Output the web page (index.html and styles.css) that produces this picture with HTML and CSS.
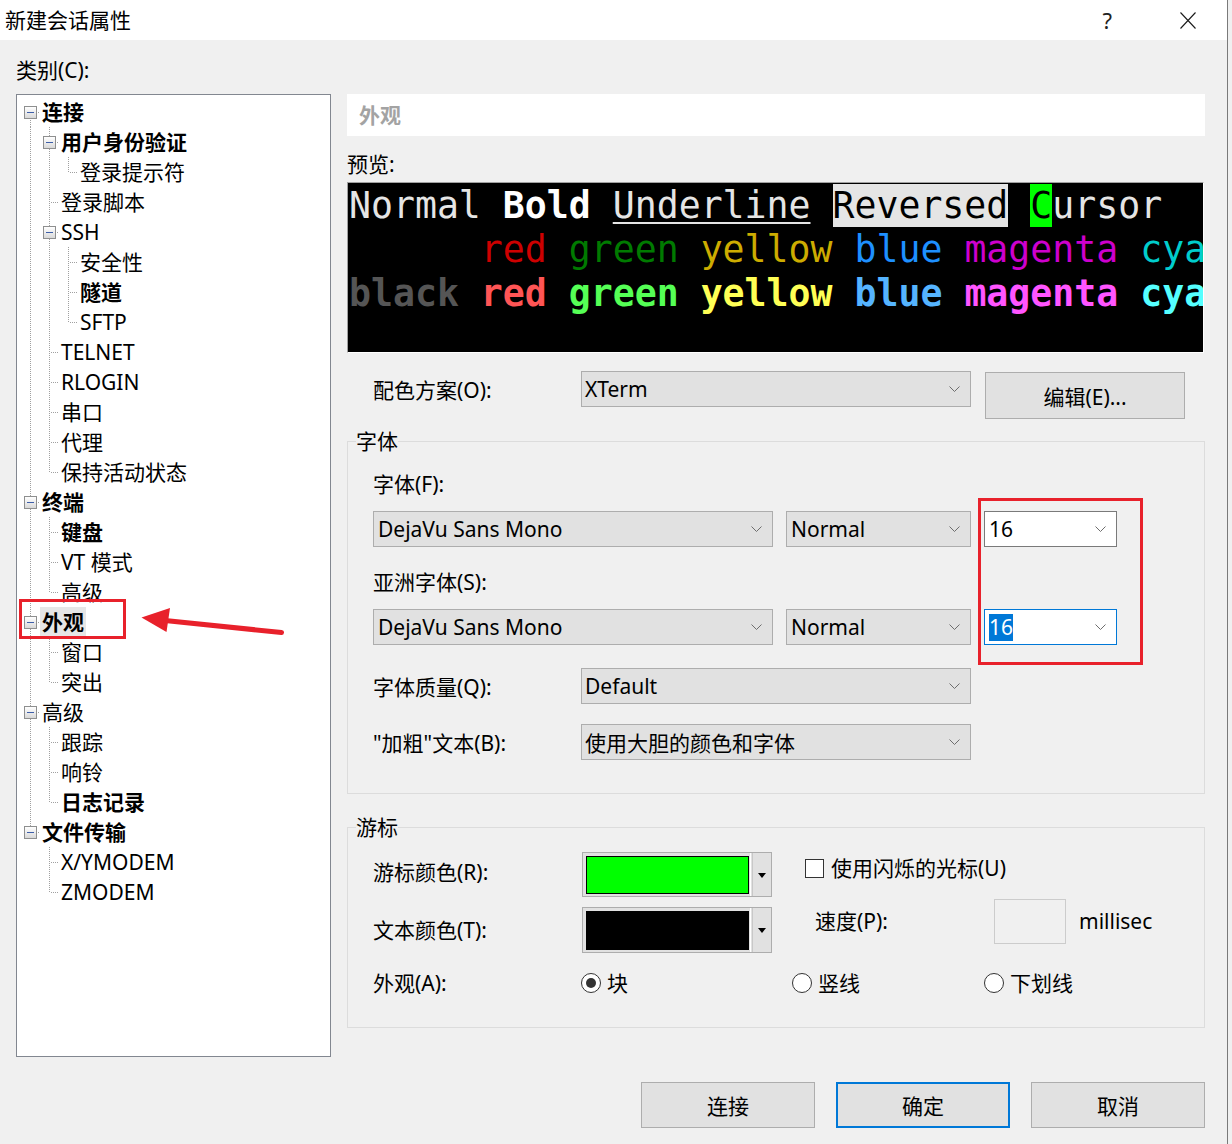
FILE: index.html
```html
<!DOCTYPE html>
<html lang="zh-CN">
<head>
<meta charset="utf-8">
<title>新建会话属性</title>
<link rel="stylesheet" href="styles.css">
</head>
<body>
<div class="window">
  <div class="titlebar">
    <span class="title">新建会话属性</span>
    <span class="help">?</span>
    <span class="close"><svg width="16" height="17" viewBox="0 0 16 17"><path d="M0.5 0.5 L15.5 16.5 M15.5 0.5 L0.5 16.5" stroke="#1a1a1a" stroke-width="1.1" fill="none"/></svg></span>
  </div>
  <div class="client">
    <div class="cat-label">类别(C):</div>
    <div class="main">
      <div class="tree">
        <div class="row"><i class="c first"><b class="box"></b></i><span class="lbl bold">连接</span></div>
        <div class="row"><i class="c pipe"></i><i class="c tee"><b class="box"></b></i><span class="lbl bold">用户身份验证</span></div>
        <div class="row"><i class="c pipe"></i><i class="c pipe"></i><i class="c ell"></i><span class="lbl">登录提示符</span></div>
        <div class="row"><i class="c pipe"></i><i class="c tee"></i><span class="lbl">登录脚本</span></div>
        <div class="row"><i class="c pipe"></i><i class="c tee"><b class="box"></b></i><span class="lbl">SSH</span></div>
        <div class="row"><i class="c pipe"></i><i class="c pipe"></i><i class="c tee"></i><span class="lbl">安全性</span></div>
        <div class="row"><i class="c pipe"></i><i class="c pipe"></i><i class="c tee"></i><span class="lbl bold">隧道</span></div>
        <div class="row"><i class="c pipe"></i><i class="c pipe"></i><i class="c ell"></i><span class="lbl">SFTP</span></div>
        <div class="row"><i class="c pipe"></i><i class="c tee"></i><span class="lbl">TELNET</span></div>
        <div class="row"><i class="c pipe"></i><i class="c tee"></i><span class="lbl">RLOGIN</span></div>
        <div class="row"><i class="c pipe"></i><i class="c tee"></i><span class="lbl">串口</span></div>
        <div class="row"><i class="c pipe"></i><i class="c tee"></i><span class="lbl">代理</span></div>
        <div class="row"><i class="c pipe"></i><i class="c ell"></i><span class="lbl">保持活动状态</span></div>
        <div class="row"><i class="c tee"><b class="box"></b></i><span class="lbl bold">终端</span></div>
        <div class="row"><i class="c pipe"></i><i class="c tee"></i><span class="lbl bold">键盘</span></div>
        <div class="row"><i class="c pipe"></i><i class="c tee"></i><span class="lbl">VT 模式</span></div>
        <div class="row"><i class="c pipe"></i><i class="c ell"></i><span class="lbl">高级</span></div>
        <div class="row"><i class="c tee"><b class="box"></b></i><span class="lbl bold selected">外观</span></div>
        <div class="row"><i class="c pipe"></i><i class="c tee"></i><span class="lbl">窗口</span></div>
        <div class="row"><i class="c pipe"></i><i class="c ell"></i><span class="lbl">突出</span></div>
        <div class="row"><i class="c tee"><b class="box"></b></i><span class="lbl">高级</span></div>
        <div class="row"><i class="c pipe"></i><i class="c tee"></i><span class="lbl">跟踪</span></div>
        <div class="row"><i class="c pipe"></i><i class="c tee"></i><span class="lbl">响铃</span></div>
        <div class="row"><i class="c pipe"></i><i class="c ell"></i><span class="lbl bold">日志记录</span></div>
        <div class="row"><i class="c ell"><b class="box"></b></i><span class="lbl bold">文件传输</span></div>
        <div class="row"><i class="c"></i><i class="c tee"></i><span class="lbl">X/YMODEM</span></div>
        <div class="row"><i class="c"></i><i class="c ell"></i><span class="lbl">ZMODEM</span></div>
      </div>

      <div class="panel">
        <div class="header">外观</div>
        <div class="preview-label">预览:</div>
        <div class="preview">
          <div class="tline"><span class="fg">Normal</span> <span class="bw">Bold</span> <span class="ul">Underline</span> <span class="rev">Reversed</span> <span class="cur">C</span><span class="fg">ursor</span></div>
          <div class="tline">      <span class="c1">red</span> <span class="c2">green</span> <span class="c3">yellow</span> <span class="c4">blue</span> <span class="c5">magenta</span> <span class="c6">cyan</span></div>
          <div class="tline bold-line"><span class="b0">black</span> <span class="b1">red</span> <span class="b2">green</span> <span class="b3">yellow</span> <span class="b4">blue</span> <span class="b5">magenta</span> <span class="b6">cyan</span></div>
        </div>

        <div class="scheme-row">
          <div class="row-label">配色方案(O):</div>
          <div class="select wide">XTerm<svg class="chev" width="11" height="6" viewBox="0 0 11 6"><path d="M0.5 0.5 L5.5 5.5 L10.5 0.5" fill="none" stroke="#6d6d6d"/></svg></div>
          <div class="btn edit">编辑(E)...</div>
        </div>

        <fieldset class="group font-group">
          <legend>字体</legend>
          <div class="group-body">
            <div class="field-label first-label">字体(F):</div>
            <div class="font-row">
              <div class="select face">DejaVu Sans Mono<svg class="chev" width="11" height="6" viewBox="0 0 11 6"><path d="M0.5 0.5 L5.5 5.5 L10.5 0.5" fill="none" stroke="#6d6d6d"/></svg></div>
              <div class="select weight">Normal<svg class="chev" width="11" height="6" viewBox="0 0 11 6"><path d="M0.5 0.5 L5.5 5.5 L10.5 0.5" fill="none" stroke="#6d6d6d"/></svg></div>
              <div class="select size">16<svg class="chev" width="11" height="6" viewBox="0 0 11 6"><path d="M0.5 0.5 L5.5 5.5 L10.5 0.5" fill="none" stroke="#6d6d6d"/></svg></div>
            </div>
            <div class="field-label asian-label">亚洲字体(S):</div>
            <div class="font-row">
              <div class="select face">DejaVu Sans Mono<svg class="chev" width="11" height="6" viewBox="0 0 11 6"><path d="M0.5 0.5 L5.5 5.5 L10.5 0.5" fill="none" stroke="#6d6d6d"/></svg></div>
              <div class="select weight">Normal<svg class="chev" width="11" height="6" viewBox="0 0 11 6"><path d="M0.5 0.5 L5.5 5.5 L10.5 0.5" fill="none" stroke="#6d6d6d"/></svg></div>
              <div class="select size focused"><span class="hl">16</span><svg class="chev" width="11" height="6" viewBox="0 0 11 6"><path d="M0.5 0.5 L5.5 5.5 L10.5 0.5" fill="none" stroke="#6d6d6d"/></svg></div>
            </div>
            <div class="form-row quality-row">
              <div class="row-label">字体质量(Q):</div>
              <div class="select wide">Default<svg class="chev" width="11" height="6" viewBox="0 0 11 6"><path d="M0.5 0.5 L5.5 5.5 L10.5 0.5" fill="none" stroke="#6d6d6d"/></svg></div>
            </div>
            <div class="form-row bold-row">
              <div class="row-label">"加粗"文本(B):</div>
              <div class="select wide">使用大胆的颜色和字体<svg class="chev" width="11" height="6" viewBox="0 0 11 6"><path d="M0.5 0.5 L5.5 5.5 L10.5 0.5" fill="none" stroke="#6d6d6d"/></svg></div>
            </div>
          </div>
        </fieldset>

        <fieldset class="group cursor-group">
          <legend>游标</legend>
          <div class="group-body">
            <div class="cur-row r1">
              <div class="row-label l1">游标颜色(R):</div>
              <div class="picker"><span class="swatch green"></span><span class="sep"></span><span class="drop"><span class="tri"></span></span></div>
              <div class="check-item"><span class="checkbox"></span>使用闪烁的光标(U)</div>
            </div>
            <div class="cur-row r2">
              <div class="row-label l2">文本颜色(T):</div>
              <div class="picker p2"><span class="swatch black"></span><span class="sep"></span><span class="drop"><span class="tri"></span></span></div>
              <div class="speed-label">速度(P):</div>
              <div class="speed-input"></div>
              <div class="unit">millisec</div>
            </div>
            <div class="cur-row r3">
              <div class="row-label l3">外观(A):</div>
              <div class="radio-item ri1"><span class="radio checked"></span>块</div>
              <div class="radio-item ri2"><span class="radio"></span>竖线</div>
              <div class="radio-item ri3"><span class="radio"></span>下划线</div>
            </div>
          </div>
        </fieldset>
      </div>
    </div>
    <div class="buttons">
      <div class="btn bottom">连接</div>
      <div class="btn bottom default">确定</div>
      <div class="btn bottom">取消</div>
    </div>
  </div>

  <div class="mark mark-tree"></div>
  <div class="mark mark-size"></div>
  <svg class="arrow" width="150" height="36" viewBox="0 0 150 36">
    <line x1="27" y1="18.5" x2="143.5" y2="30.5" stroke="#e8212b" stroke-width="5" stroke-linecap="round"/>
    <polygon points="3.5,15.5 32,6 28.5,30" fill="#e8212b"/>
  </svg>
</div>
</body>
</html>
```

FILE: styles.css
```css
html, body {
  margin: 0;
  padding: 0;
  background: #f0f0f0;
}
body {
  font-family: "Noto Sans", "Noto Sans CJK SC", sans-serif;
  font-size: 21px;
  color: #000;
}
.window {
  position: relative;
  width: 1227px;
  height: 1144px;
  border-right: 1px solid #7a7a7a;
  background: #f0f0f0;
  overflow: hidden;
}
.titlebar {
  height: 40px;
  background: #fff;
  display: flex;
  align-items: center;
}
.title {
  flex: 1;
  padding-left: 5px;
  line-height: 30px;
}
.help {
  font-size: 22px;
  color: #222;
  margin-right: 68px;
  line-height: 30px;
}
.close {
  display: flex;
  margin-right: 31px;
}
.client {
  padding: 0 0 0 16px;
}
.cat-label {
  margin-top: 16px;
  line-height: 28px;
}
.main {
  margin-top: 10px;
  display: flex;
  gap: 16px;
  align-items: flex-start;
}

/* tree */
.tree {
  width: 315px;
  height: 963px;
  box-sizing: border-box;
  border: 1px solid #828790;
  background: #fff;
  padding: 2px 0 0 4px;
}
.row {
  display: flex;
  height: 30px;
  align-items: stretch;
}
.c {
  display: block;
  width: 19px;
  height: 30px;
  flex: none;
}
.pipe {
  background: repeating-linear-gradient(to bottom, #a0a0a0 0 1px, transparent 1px 2px) 9px 0 / 1px 100% no-repeat;
}
.tee {
  background:
    repeating-linear-gradient(to right, #a0a0a0 0 1px, transparent 1px 2px) 11px 15px / 8px 1px no-repeat,
    repeating-linear-gradient(to bottom, #a0a0a0 0 1px, transparent 1px 2px) 9px 0 / 1px 100% no-repeat;
}
.ell {
  background:
    repeating-linear-gradient(to right, #a0a0a0 0 1px, transparent 1px 2px) 11px 15px / 8px 1px no-repeat,
    repeating-linear-gradient(to bottom, #a0a0a0 0 1px, transparent 1px 2px) 9px 0 / 1px 16px no-repeat;
}
.first {
  background:
    repeating-linear-gradient(to right, #a0a0a0 0 1px, transparent 1px 2px) 11px 15px / 8px 1px no-repeat,
    repeating-linear-gradient(to bottom, #a0a0a0 0 1px, transparent 1px 2px) 9px 15px / 1px 15px no-repeat;
}
.box {
  display: block;
  width: 13px;
  height: 13px;
  box-sizing: border-box;
  margin: 9px 0 0 3px;
  border: 1px solid #8e8f8f;
  background:
    linear-gradient(#3d5ea8, #3d5ea8) 2px 5px / 7px 1px no-repeat,
    linear-gradient(#ffffff, #d8d8d8);
}
.lbl {
  padding: 0 2px;
  line-height: 30px;
  white-space: nowrap;
}
.bold { font-weight: 700; }
.selected { background: #e6e6e6; }

/* right panel */
.panel {
  width: 858px;
}
.header {
  height: 42px;
  line-height: 42px;
  background: #fff;
  padding-left: 12px;
  color: #a3a3a3;
  font-weight: 700;
}
.preview-label {
  margin-top: 14px;
  line-height: 28px;
}
.preview {
  margin-top: 4px;
  height: 171px;
  box-sizing: border-box;
  width: 857px;
  background: #000;
  border-top: 1px solid #a0a0a0;
  border-left: 1px solid #a0a0a0;
  border-right: 1px solid #fff;
  border-bottom: 1px solid #fff;
  padding: 1px 0 0 1px;
  overflow: hidden;
  font-family: "DejaVu Sans Mono", monospace;
  font-size: 36.5px;
  color: #e5e5e5;
}
.tline {
  height: 44px;
  line-height: 44px;
  white-space: pre;
}
.bw { color: #fff; font-weight: 700; }
.ul { text-decoration: underline; text-underline-offset: 4px; text-decoration-thickness: 2px; }
.rev { background: #e5e5e5; color: #000; }
.cur { background: #00ff00; color: #000; }
.c1 { color: #cd0000; }
.c2 { color: #007a00; }
.c3 { color: #cdac00; }
.c4 { color: #1e90ff; }
.c5 { color: #cd00cd; }
.c6 { color: #00cdcd; }
.bold-line { font-weight: 700; }
.b0 { color: #555555; }
.b1 { color: #ff5555; }
.b2 { color: #55ff55; }
.b3 { color: #ffff55; }
.b4 { color: #55b4ff; }
.b5 { color: #ff55ff; }
.b6 { color: #55ffff; }

.scheme-row {
  margin-top: 18px;
  padding-left: 26px;
  display: flex;
  align-items: flex-start;
}
.row-label {
  width: 208px;
  flex: none;
  line-height: 34px;
  padding-top: 2px;
  white-space: nowrap;
}
.select {
  display: flex;
  align-items: center;
  justify-content: space-between;
  box-sizing: border-box;
  height: 36px;
  background: #e1e1e1;
  border: 1px solid #adadad;
  padding: 0 10px 0 3px;
  white-space: nowrap;
  flex: none;
}
.chev { flex: none; }
.select.wide { width: 390px; }
.btn {
  display: flex;
  align-items: center;
  justify-content: center;
  box-sizing: border-box;
  background: #e1e1e1;
  border: 1px solid #adadad;
  flex: none;
}
.btn.edit {
  margin-left: 14px;
  margin-top: 1px;
  width: 200px;
  height: 47px;
}

/* group boxes */
.group {
  margin: 0;
  padding: 0;
  border: 1px solid #dcdcdc;
  min-width: 0;
}
.group legend {
  margin-left: 8px;
  padding: 0;
  line-height: 28px;
}
.font-group { margin-top: 8px; }
.cursor-group { margin-top: 19px; }
.group-body { padding-left: 25px; }
.font-group .group-body { padding-bottom: 33px; }
.cursor-group .group-body { padding-bottom: 30px; }
.field-label { line-height: 28px; }
.first-label { margin-top: 15px; }
.asian-label { margin-top: 21px; }
.font-row {
  margin-top: 13px;
  display: flex;
}
.select.face { width: 400px; padding-left: 4px; }
.select.weight { width: 185px; margin-left: 13px; padding-left: 4px; }
.select.size {
  width: 133px;
  margin-left: 13px;
  padding-left: 4px;
  background: #fff;
  border-color: #7a7a7a;
}
.select.size.focused { border-color: #0078d7; }
.hl {
  background: #0078d7;
  color: #fff;
  line-height: 27px;
}
.form-row { display: flex; align-items: flex-start; }
.quality-row { margin-top: 23px; }
.bold-row { margin-top: 20px; }

.cur-row { display: flex; align-items: flex-start; }
.r1 { margin-top: 11px; }
.r2 { margin-top: 2px; }
.r3 { margin-top: 16px; }
.l1 { width: 209px; line-height: 40px; padding-top: 0; }
.l2 { width: 209px; line-height: 46px; padding-top: 0; margin-top: 8px; }
.l3 { width: 208px; line-height: 28px; padding-top: 0; }
.picker {
  display: flex;
  width: 190px;
  height: 45px;
  box-sizing: border-box;
  background: #e1e1e1;
  border: 1px solid #adadad;
  padding: 3px 0 2px 3px;
  flex: none;
}
.picker.p2 { height: 46px; margin-top: 8px; }
.swatch {
  width: 163px;
  box-sizing: border-box;
  border: 1px solid #000;
}
.swatch.green { background: #00ff00; }
.swatch.black { background: #000; }
.sep {
  width: 1px;
  border-left: 1px solid #fff;
  border-right: 1px solid #c8c8c8;
  margin: -3px 0 -2px 1px;
}
.drop {
  flex: 1;
  display: flex;
  align-items: center;
  justify-content: center;
}
.tri {
  width: 0;
  height: 0;
  border-left: 4px solid transparent;
  border-right: 4px solid transparent;
  border-top: 5px solid #000;
}
.check-item {
  margin-left: 33px;
  margin-top: 2px;
  line-height: 28px;
  display: flex;
  align-items: center;
  white-space: nowrap;
}
.checkbox {
  width: 19px;
  height: 19px;
  box-sizing: border-box;
  border: 1px solid #333;
  background: #fff;
  margin-right: 7px;
}
.speed-label {
  margin-left: 43px;
  width: 179px;
  line-height: 45px;
  flex: none;
}
.speed-input {
  width: 72px;
  height: 45px;
  box-sizing: border-box;
  border: 1px solid #cccccc;
  background: #f0f0f0;
  flex: none;
}
.unit {
  margin-left: 13px;
  line-height: 45px;
}
.radio-item {
  display: flex;
  align-items: center;
  line-height: 28px;
  white-space: nowrap;
}
.ri1 { width: 211px; }
.ri2 { width: 192px; }
.radio {
  width: 20px;
  height: 20px;
  box-sizing: border-box;
  border: 1px solid #333;
  border-radius: 50%;
  background: #fff;
  margin-right: 6px;
  display: flex;
  align-items: center;
  justify-content: center;
}
.radio.checked::after {
  content: "";
  width: 10px;
  height: 10px;
  border-radius: 50%;
  background: #333;
}

.buttons {
  width: 1189px;
  margin-top: 25px;
  display: flex;
  justify-content: flex-end;
  gap: 21px;
}
.btn.bottom {
  width: 174px;
  height: 46px;
}
.btn.default {
  border: 2px solid #0078d7;
}

/* annotations */
.mark {
  position: absolute;
  box-sizing: border-box;
  border: 3px solid #e8212b;
}
.mark-tree {
  left: 19px;
  top: 599px;
  width: 107px;
  height: 40px;
}
.mark-size {
  left: 978px;
  top: 498px;
  width: 165px;
  height: 167px;
}
.arrow {
  position: absolute;
  left: 138px;
  top: 602px;
}
```
